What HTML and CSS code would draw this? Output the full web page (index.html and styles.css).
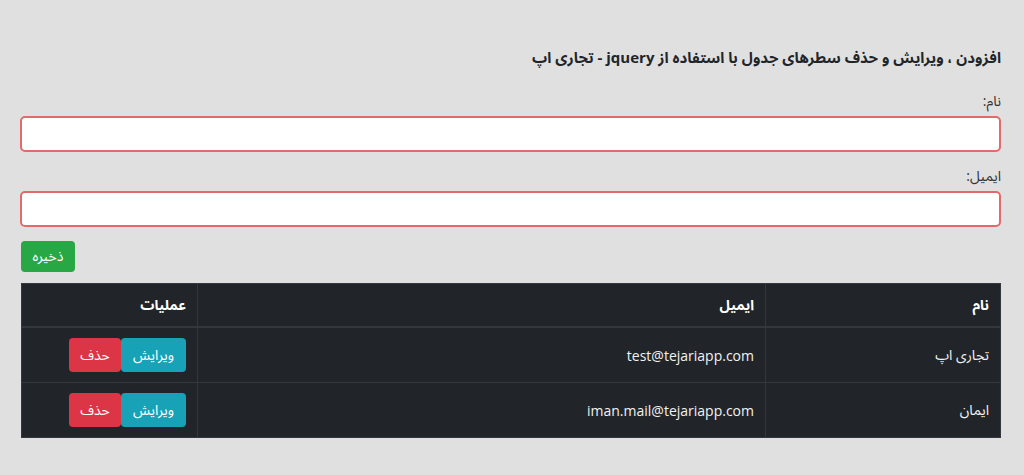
FILE: index.html
```html
<!DOCTYPE html>
<html lang="fa" dir="rtl">
<head>
<meta charset="utf-8">
<link rel="stylesheet" href="styles.css">
</head>
<body>
<div class="container">
  <h1 class="title">افزودن ، ویرایش و حذف سطرهای جدول با استفاده از jquery - تجاری اپ</h1>
  <label class="label">نام:</label>
  <input class="field" type="text">
  <label class="label">ایمیل:</label>
  <input class="field" type="text">
  <div class="actions"><button class="btn btn-save">ذخیره</button></div>
  <table class="grid">
    <thead>
      <tr><th class="c-name">نام</th><th class="c-mail">ایمیل</th><th class="c-ops">عملیات</th></tr>
    </thead>
    <tbody>
      <tr><td>تجاری اپ</td><td>test@tejariapp.com</td><td><button class="btn btn-edit">ویرایش</button><button class="btn btn-del">حذف</button></td></tr>
      <tr><td>ایمان</td><td>iman.mail@tejariapp.com</td><td><button class="btn btn-edit">ویرایش</button><button class="btn btn-del">حذف</button></td></tr>
    </tbody>
  </table>
</div>
</body>
</html>
```
FILE: styles.css
```css
html, body {
  margin: 0;
  padding: 0;
  background: #e0e0e0;
}
body {
  font-family: "Open Sans", "Noto Sans Arabic", "Noto Naskh Arabic", "Noto Sans", "DejaVu Sans", sans-serif;
  color: #212529;
  font-size: 14px;
}
.container {
  width: 980px;
  margin-right: 23px;
  padding-top: 45px;
  display: flex;
  flex-direction: column;
}
.title {
  font-size: 15px;
  font-weight: bold;
  line-height: 24px;
  margin: 0 0 21px 0;
}
.label {
  display: block;
  line-height: 22px;
  margin-bottom: 4px;
  color: #333;
}
.field {
  box-sizing: border-box;
  height: 36px;
  width: 981px;
  margin: 0 0 13px -1px;
  border: 2px solid #e26a6a;
  border-radius: 5px;
  background: #fff;
  outline: none;
}
.field:last-of-type {
  margin-bottom: 14px;
}
.actions {
  display: flex;
  justify-content: flex-end;
  margin-bottom: 11px;
}
.btn {
  font-family: inherit;
  font-size: 14px;
  color: #fff;
  border: none;
  border-radius: 4px;
  cursor: pointer;
}
.btn-save {
  background: #28a745;
  height: 31px;
  width: 54px;
  padding: 0;
}
.grid {
  width: 980px;
  border-collapse: collapse;
  background: #212529;
  color: #f2f2f2;
  font-size: 14px;
}
.grid th, .grid td {
  border: 1px solid #32383e;
  text-align: right;
  padding: 0 11px;
}
.grid thead th {
  height: 42px;
  font-weight: bold;
  color: #fff;
  border-bottom: 2px solid #32383e;
}
.grid tbody td {
  height: 54px;
}
.c-name { width: 212px; }
.c-mail { width: 545px; }
.grid td:nth-child(3) {
  font-size: 0;
}
.btn-edit {
  background: #17a2b8;
  height: 34px;
  width: 65px;
  padding: 0;
}
.btn-del {
  background: #dc3545;
  height: 34px;
  width: 52px;
  padding: 0;
}
```
